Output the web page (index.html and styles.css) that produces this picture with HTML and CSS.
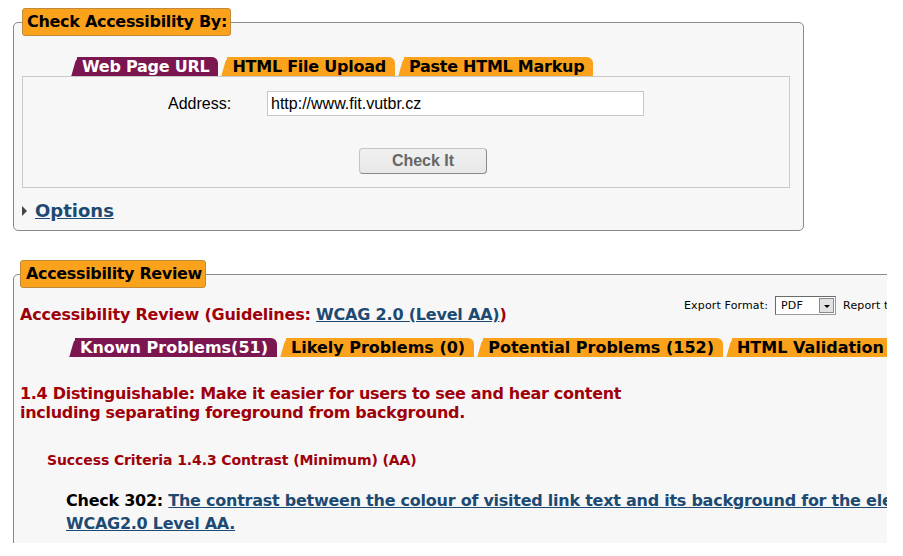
FILE: index.html
```html
<!DOCTYPE html>
<html>
<head>
<meta charset="utf-8">
<link rel="stylesheet" href="styles.css">
</head>
<body>
<div class="page">
  <fieldset class="box box-check">
    <legend class="legend">Check Accessibility By:</legend>
    <div class="tabs tabs-check">
      <span class="tab tab-active">Web Page URL</span>
      <span class="tab">HTML File Upload</span>
      <span class="tab">Paste HTML Markup</span>
    </div>
    <div class="panel">
      <div class="address-row">
        <label class="address-label" for="addr">Address:</label>
        <input class="address-input" id="addr" type="text" value="http://www.fit.vutbr.cz">
      </div>
      <div class="btn-row">
        <button class="check-btn" type="button">Check It</button>
      </div>
    </div>
    <div class="options">
      <span class="tri"></span><a class="options-link" href="#">Options</a>
    </div>
  </fieldset>

  <fieldset class="box box-review">
    <legend class="legend legend-review">Accessibility Review</legend>
    <div class="review-head">
      <h2 class="review-title">Accessibility Review (Guidelines: <a class="link" href="#">WCAG 2.0 (Level AA)</a>)</h2>
      <div class="export">
        <span class="export-label">Export Format:</span>
        <span class="select"><span class="select-val">PDF</span><span class="select-btn"><span class="select-arrow"></span></span></span>
        <span class="export-label">Report to</span>
      </div>
    </div>
    <div class="tabs tabs-review">
      <span class="tab tab-active">Known Problems(51)</span>
      <span class="tab">Likely Problems (0)</span>
      <span class="tab">Potential Problems (152)</span>
      <span class="tab">HTML Validation</span>
    </div>
    <div class="results">
      <h3 class="guideline">1.4 Distinguishable: Make it easier for users to see and hear content<br>including separating foreground from background.</h3>
      <h4 class="criteria">Success Criteria 1.4.3 Contrast (Minimum) (AA)</h4>
      <p class="check">Check 302: <a class="link" href="#">The contrast between the colour of visited link text and its background for the element is not sufficient to meet<br>WCAG2.0 Level AA.</a></p>
    </div>
  </fieldset>
</div>
</body>
</html>
```

FILE: styles.css
```css
html, body {
  margin: 0;
  padding: 0;
  background: #ffffff;
}

.page {
  width: 887px;
  height: 543px;
  overflow: hidden;
  padding: 0 0 0 13px;
  box-sizing: border-box;
  font-family: "DejaVu Sans", Verdana, sans-serif;
}

.box {
  margin: 0;
  border: 1px solid #8a8a8a;
  border-radius: 5px;
  background: #f7f7f7;
  min-width: 0;
}

.box-check {
  width: 791px;
  box-sizing: border-box;
  margin-top: 8px;
  padding: 0 13px 8px 8px;
  height: 223px;
}

.legend {
  background: #fba21c;
  border: 1px solid #c08a3a;
  border-radius: 3px;
  font-weight: bold;
  font-size: 16px;
  letter-spacing: -0.3px;
  color: #000;
  padding: 0 3px 0 4px;
  height: 28px;
  line-height: 26px;
  box-sizing: border-box;
}

.tabs {
  display: flex;
  gap: 4px;
  margin-left: 50px;
}

.tabs-check {
  margin-top: 21px;
}

.tabs-check .tab {
  letter-spacing: -0.25px;
}

.tab {
  position: relative;
  z-index: 0;
  display: block;
  height: 19px;
  line-height: 20px;
  padding: 0 9px 0 10px;
  font-weight: bold;
  font-size: 16px;
  color: #000;
  white-space: nowrap;
}

.tab::before {
  content: "";
  position: absolute;
  z-index: -1;
  top: 0;
  bottom: 0;
  left: 5px;
  right: 0;
  background: #fba21c;
  border-radius: 0 6px 0 0;
}

.tab::after {
  content: "";
  position: absolute;
  z-index: -1;
  top: 0;
  bottom: 0;
  left: 2px;
  width: 10px;
  background: #fba21c;
  border-radius: 5px 0 0 0;
  transform: skewX(-16deg);
}

.tab-active {
  color: #fff;
}

.tab-active::before,
.tab-active::after {
  background: #7b1650;
}

.panel {
  border: 1px solid #c9c9c9;
  background: #f7f7f7;
  height: 112px;
  box-sizing: border-box;
}

.address-row {
  display: flex;
  align-items: center;
  margin-top: 14px;
  padding-left: 145px;
}

.address-label {
  font-family: "Liberation Sans", Arial, sans-serif;
  font-size: 16px;
  color: #000;
  width: 99px;
}

.address-input {
  width: 377px;
  height: 25px;
  box-sizing: border-box;
  border: 1px solid #c6c6c6;
  background: #fff;
  font-family: "Liberation Sans", Arial, sans-serif;
  font-size: 16px;
  padding: 0 3px;
  margin: 0;
  color: #000;
}

.btn-row {
  display: flex;
  margin-top: 32px;
  padding-left: 336px;
}

.check-btn {
  width: 128px;
  height: 26px;
  margin: 0;
  padding: 0;
  background: linear-gradient(#f0f0f0, #e8e8e8);
  border: 1px solid #c4c4c4;
  border-right-color: #8a8a8a;
  border-bottom-color: #8a8a8a;
  border-radius: 4px;
  font-family: "Liberation Sans", Arial, sans-serif;
  font-weight: bold;
  font-size: 16px;
  color: #666;
}

.options {
  display: flex;
  align-items: center;
  margin-top: 12px;
}

.tri {
  width: 0;
  height: 0;
  border-top: 5px solid transparent;
  border-bottom: 5px solid transparent;
  border-left: 5px solid #444;
  margin-right: 8px;
}

.options-link {
  font-weight: bold;
  font-size: 18px;
  color: #1d4a72;
  text-decoration: underline;
}

.box-review {
  width: 1000px;
  box-sizing: border-box;
  margin-top: 29px;
  padding: 0 0 0 6px;
  height: 300px;
}

.legend-review {
  padding: 0 3px 0 5px;
  letter-spacing: -0.35px;
}

.review-head {
  display: flex;
  align-items: flex-start;
  margin-top: 8px;
}

.review-title {
  margin: 9px 0 0 0;
  font-size: 16px;
  font-weight: bold;
  letter-spacing: -0.2px;
  color: #a0000a;
  width: 663px;
  white-space: nowrap;
}

.link {
  color: #1d4a72;
  text-decoration: underline;
}

.export {
  display: flex;
  align-items: center;
  gap: 7px;
  font-size: 11px;
  letter-spacing: 0.15px;
  color: #000;
  margin-left: 1px;
}

.select {
  display: flex;
  align-items: center;
  width: 61px;
  height: 19px;
  box-sizing: border-box;
  border: 1px solid #9a9a9a;
  border-top-color: #6a6a6a;
  border-left-color: #6a6a6a;
  background: #fff;
  padding: 0 1px 0 5px;
}

.select-val {
  flex: 1;
  font-size: 11px;
}

.select-btn {
  width: 15px;
  height: 15px;
  box-sizing: border-box;
  background: #e2e2e2;
  border: 1px solid #8a8a8a;
  display: flex;
  align-items: center;
  justify-content: center;
}

.select-arrow {
  width: 0;
  height: 0;
  border-left: 3px solid transparent;
  border-right: 3px solid transparent;
  border-top: 3px solid #000;
  margin-top: 2px;
}

.tabs-review {
  margin-top: 14px;
}

.results {
  padding-top: 1px;
}

.guideline {
  margin: 26px 0 0 0;
  font-size: 16px;
  line-height: 19px;
  font-weight: bold;
  letter-spacing: -0.3px;
  color: #a0000a;
}

.criteria {
  margin: 30px 0 0 27px;
  font-size: 14px;
  font-weight: bold;
  letter-spacing: -0.1px;
  color: #a0000a;
}

.check {
  margin: 21px 0 0 46px;
  font-size: 16px;
  line-height: 23px;
  font-weight: bold;
  letter-spacing: -0.25px;
  color: #000;
  white-space: nowrap;
}
```
